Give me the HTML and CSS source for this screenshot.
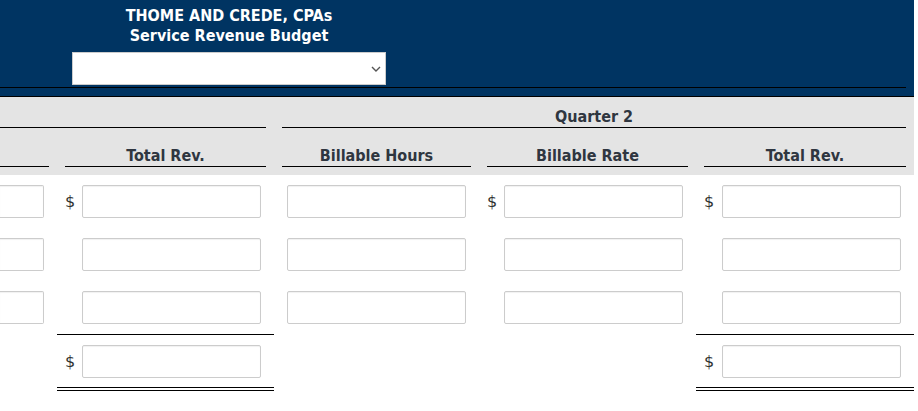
FILE: index.html
```html
<!DOCTYPE html>
<html>
<head>
<meta charset="utf-8">
<link rel="stylesheet" href="styles.css">
</head>
<body>
<div class="page">
  <header class="banner">
    <div class="title-block">
      <div class="title">THOME AND CREDE, CPAs</div>
      <div class="title">Service Revenue Budget</div>
      <div class="select-wrap">
        <select class="period"><option></option></select>
        <svg class="chev" width="10" height="6" viewBox="0 0 10 6"><path d="M1 1 L5 5 L9 1" fill="none" stroke="#555" stroke-width="1.4"/></svg>
      </div>
    </div>
    <div class="banner-rule"></div>
  </header>

  <section class="heads">
    <div class="hcell span-ab"><div class="hlabel"></div></div>
    <div class="hcell span-ce"><div class="hlabel">Quarter 2</div></div>
    <div class="hcell sub first"><div class="hlabel"></div></div>
    <div class="hcell sub"><div class="hlabel">Total Rev.</div></div>
    <div class="hcell sub"><div class="hlabel">Billable Hours</div></div>
    <div class="hcell sub"><div class="hlabel">Billable Rate</div></div>
    <div class="hcell sub"><div class="hlabel">Total Rev.</div></div>
  </section>

  <section class="rows">
    <div class="row">
      <div class="cell"><input class="box cut"></div>
      <div class="cell"><span class="dollar">$</span><input class="box"></div>
      <div class="cell"><input class="box"></div>
      <div class="cell"><span class="dollar">$</span><input class="box"></div>
      <div class="cell"><span class="dollar">$</span><input class="box"></div>
    </div>
    <div class="row">
      <div class="cell"><input class="box cut"></div>
      <div class="cell"><input class="box"></div>
      <div class="cell"><input class="box"></div>
      <div class="cell"><input class="box"></div>
      <div class="cell"><input class="box"></div>
    </div>
    <div class="row">
      <div class="cell"><input class="box cut"></div>
      <div class="cell"><input class="box"></div>
      <div class="cell"><input class="box"></div>
      <div class="cell"><input class="box"></div>
      <div class="cell"><input class="box"></div>
    </div>
    <div class="row total-row">
      <div class="cell blank"></div>
      <div class="cell total"><span class="dollar">$</span><input class="box"></div>
      <div class="cell blank"></div>
      <div class="cell blank"></div>
      <div class="cell total"><span class="dollar">$</span><input class="box"></div>
    </div>
  </section>
</div>
</body>
</html>
```

FILE: styles.css
```css
html, body {
  margin: 0;
  padding: 0;
  background: #fff;
}
body {
  font-family: Tahoma, "DejaVu Sans Condensed", "DejaVu Sans", sans-serif;
  font-stretch: condensed;
  overflow: hidden;
}
.page {
  width: 914px;
}
.banner {
  background: #003462;
  border-bottom: 1px solid #000;
  padding-top: 6px;
  height: 90px;
}
.title-block {
  width: 458px;
  display: flex;
  flex-direction: column;
  align-items: center;
}
.title {
  color: #fff;
  font-weight: bold;
  font-size: 16px;
  line-height: 20px;
}
.select-wrap {
  position: relative;
  margin-top: 6px;
  width: 314px;
  height: 33px;
}
.period {
  appearance: none;
  -webkit-appearance: none;
  width: 100%;
  height: 100%;
  border: 1px solid #ccc;
  border-radius: 0;
  background: #fff;
  margin: 0;
}
.chev {
  position: absolute;
  right: 5px;
  top: 14px;
}
.banner-rule {
  margin-top: 2px;
  width: 906px;
  height: 1px;
  background: #000;
}
.heads {
  background: #e4e4e4;
  display: grid;
  grid-template-columns: 57px 217px 205px 217px 218px;
  padding-bottom: 8px;
}
.hcell {
  padding: 0 8px;
}
.span-ab { grid-column: 1 / 3; padding-left: 0; padding-top: 10px; }
.span-ce { grid-column: 3 / 6; padding-top: 10px; }
.sub { padding-top: 18px; }
.sub.first { padding-left: 0; }
.hlabel {
  height: 20px;
  line-height: 20px;
  border-bottom: 1px solid #000;
  text-align: center;
  font-weight: bold;
  font-size: 16px;
  color: #2f3640;
}
.row {
  display: grid;
  grid-template-columns: 57px 217px 205px 217px 218px;
  padding: 10px 0;
}
.cell {
  display: flex;
  align-items: center;
  justify-content: flex-end;
  padding: 0 13px 0 8px;
}
.cell:first-child { padding-left: 0; }
.dollar {
  margin-right: auto;
  font-family: "DejaVu Sans", sans-serif;
  font-stretch: normal;
  font-size: 16px;
  color: #333;
}
.box {
  box-sizing: border-box;
  width: 179px;
  height: 33px;
  margin: 0;
  border: 1px solid #ccc;
  border-radius: 2px;
  background: #fff;
  box-shadow: inset 0 1px 1px rgba(0,0,0,0.06);
  flex: none;
}
.box.cut {
  width: 44px;
  border-left: none;
  border-radius: 0 2px 2px 0;
}
.total-row {
  padding: 0;
}
.total-row .cell {
  padding-top: 10px;
  padding-bottom: 9px;
}
.total {
  border-top: 1px solid #000;
  border-bottom: 4px double #000;
}
```
